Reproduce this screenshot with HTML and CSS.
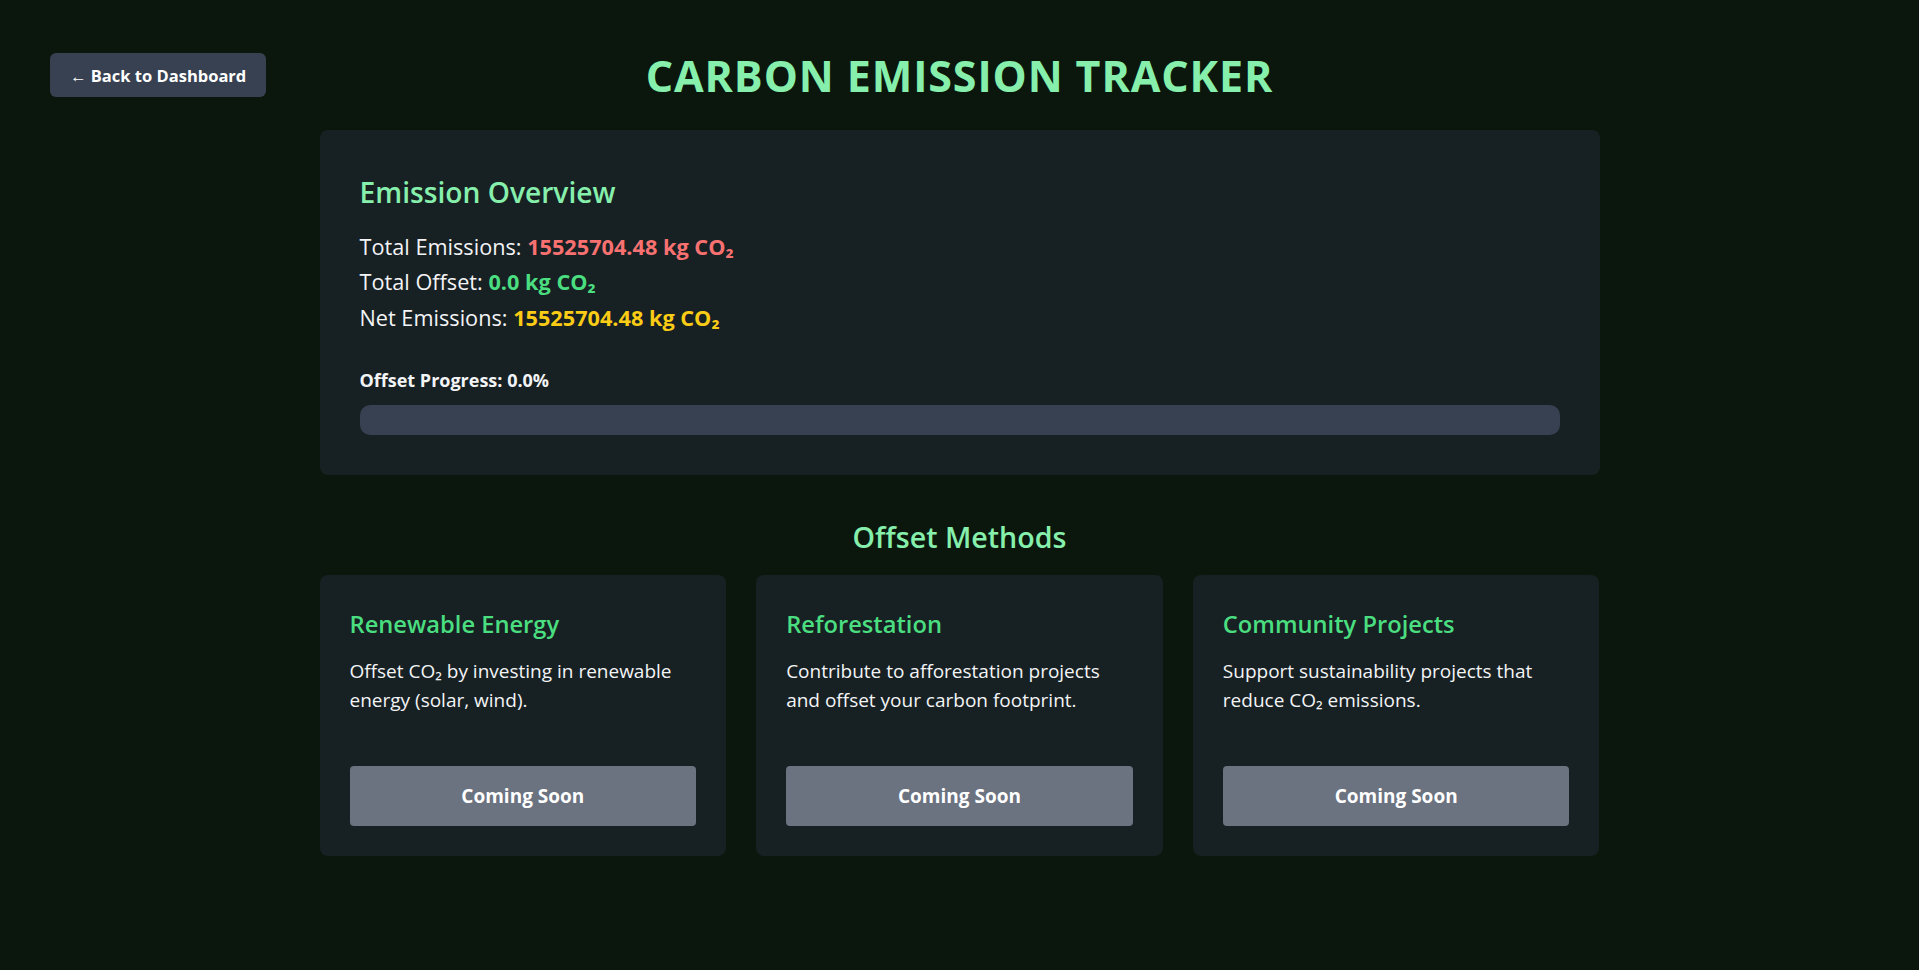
FILE: index.html
```html
<!DOCTYPE html>
<html lang="en">
<head>
<meta charset="utf-8">
<title>Carbon Emission Tracker</title>
<link rel="stylesheet" href="styles.css">
</head>
<body>
<a class="back-btn" href="#">← Back to Dashboard</a>
<main class="page">
  <h1 class="page-title">CARBON EMISSION TRACKER</h1>

  <section class="card overview">
    <h2 class="overview-title">Emission Overview</h2>
    <p class="stat">Total Emissions: <strong class="val-red">15525704.48 kg CO₂</strong></p>
    <p class="stat">Total Offset: <strong class="val-green">0.0 kg CO₂</strong></p>
    <p class="stat">Net Emissions: <strong class="val-yellow">15525704.48 kg CO₂</strong></p>
    <div class="progress">
      <div class="progress-label">Offset Progress: 0.0%</div>
      <div class="progress-track"><div class="progress-fill" style="width:0%"></div></div>
    </div>
  </section>

  <h2 class="methods-title">Offset Methods</h2>
  <div class="methods">
    <div class="card method">
      <h3 class="method-title">Renewable Energy</h3>
      <p class="method-desc">Offset CO₂ by investing in renewable energy (solar, wind).</p>
      <button class="method-btn" type="button">Coming Soon</button>
    </div>
    <div class="card method">
      <h3 class="method-title">Reforestation</h3>
      <p class="method-desc">Contribute to afforestation projects and offset your carbon footprint.</p>
      <button class="method-btn" type="button">Coming Soon</button>
    </div>
    <div class="card method">
      <h3 class="method-title">Community Projects</h3>
      <p class="method-desc">Support sustainability projects that reduce CO₂ emissions.</p>
      <button class="method-btn" type="button">Coming Soon</button>
    </div>
  </div>
</main>
</body>
</html>
```
FILE: styles.css
```css
* { box-sizing: border-box; }

body {
  margin: 0;
  background: #0b170d;
  color: #f3f4f6;
  font-family: "Open Sans", "Noto Sans", "Liberation Sans", sans-serif;
  min-height: 100vh;
}

.back-btn {
  position: absolute;
  left: 50px;
  top: 53px;
  height: 44px;
  padding: 0 20px;
  display: flex;
  align-items: center;
  background: #374151;
  color: #ffffff;
  font-weight: 700;
  font-size: 16.5px;
  text-decoration: none;
  border-radius: 6px;
}

.page {
  max-width: 1280px;
  margin: 0 auto;
  padding-top: 46px;
}

.page-title {
  margin: 0 0 25px;
  text-align: center;
  color: #86efac;
  font-size: 43px;
  font-weight: 700;
  line-height: 59px;
  letter-spacing: 0.9px;
}

.card {
  background: #172023;
  border-radius: 8px;
}

.overview {
  padding: 40px;
}

.overview-title {
  margin: 3px 0 18px;
  color: #86efac;
  font-size: 28.2px;
  font-weight: 600;
  line-height: 38px;
}

.stat {
  margin: 0;
  font-size: 21.7px;
  line-height: 35.3px;
}

.stat strong { font-weight: 700; }
.val-red { color: #f87171; }
.val-green { color: #4ade80; }
.val-yellow { color: #facc15; }

.progress {
  margin-top: 33px;
}

.progress-label {
  font-size: 18px;
  font-weight: 700;
  line-height: 24px;
  margin-bottom: 13px;
}

.progress-track {
  height: 30px;
  background: #374151;
  border-radius: 10px;
  overflow: hidden;
}

.progress-fill {
  height: 100%;
  background: #4ade80;
}

.methods-title {
  margin: 43px 0 20px;
  text-align: center;
  color: #86efac;
  font-size: 28.6px;
  font-weight: 600;
  line-height: 37px;
}

.methods {
  display: grid;
  grid-template-columns: repeat(3, 1fr);
  gap: 30px;
}

.method {
  padding: 30px;
  display: flex;
  flex-direction: column;
}

.method-title {
  margin: 3px 0 17px;
  color: #4ade80;
  font-size: 23.7px;
  font-weight: 600;
  line-height: 32px;
}

.method-desc {
  margin: 0 0 50px;
  font-size: 19px;
  line-height: 29.4px;
}

.method-btn {
  height: 60px;
  width: 100%;
  border: none;
  border-radius: 4px;
  background: #6b7280;
  color: #ffffff;
  font-family: inherit;
  font-size: 19px;
  font-weight: 700;
}
```
